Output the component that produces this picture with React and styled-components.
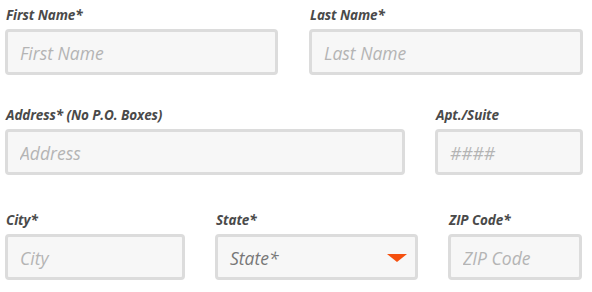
import styled, { createGlobalStyle } from "styled-components";

const GlobalStyle = createGlobalStyle`
  body {
    margin: 0;
    background: #ffffff;
    font-family: "Open Sans", "Liberation Sans", sans-serif;
  }
`;

const Form = styled.form`
  width: 578px;
  padding: 7px 0 0 5px;
  display: flex;
  flex-direction: column;
`;

const Row = styled.div`
  display: grid;
  grid-template-columns: ${(p) => p.cols};
  column-gap: ${(p) => p.gap || "30px"};
  margin-top: ${(p) => p.top || "0"};
`;

const Field = styled.div`
  display: flex;
  flex-direction: column;
`;

const Label = styled.label`
  font-size: 13.5px;
  line-height: 17px;
  font-weight: 700;
  font-style: italic;
  color: #4a4a4a;
  margin: 0 0 5px 1px;
  letter-spacing: -0.1px;
`;

const Input = styled.input`
  box-sizing: border-box;
  height: 46px;
  width: 100%;
  border: 3px solid #dcdcdc;
  border-radius: 4px;
  background: #f7f7f7;
  padding: 2px 12px 0;
  font-family: inherit;
  font-size: 17.5px;
  font-style: italic;
  color: #555;
  outline: none;

  &::placeholder {
    color: #b4b4b4;
  }
`;

const SelectBox = styled.div`
  box-sizing: border-box;
  height: 46px;
  border: 3px solid #dcdcdc;
  border-radius: 4px;
  background: #f7f7f7;
  padding: 2px 8px 0 12px;
  display: flex;
  align-items: center;
  justify-content: space-between;
  font-size: 17.5px;
  font-style: italic;
  color: #777;
`;

const Caret = styled.span`
  width: 0;
  height: 0;
  border-left: 10px solid transparent;
  border-right: 10px solid transparent;
  border-top: 8px solid #f5500f;
`;

const App = () => (
  <>
    <GlobalStyle />
    <Form>
      <Row cols="273px 274px" gap="31px">
        <Field>
          <Label>First Name*</Label>
          <Input placeholder="First Name" />
        </Field>
        <Field>
          <Label>Last Name*</Label>
          <Input placeholder="Last Name" />
        </Field>
      </Row>
      <Row cols="400px 148px" top="32px">
        <Field>
          <Label>Address* (No P.O. Boxes)</Label>
          <Input placeholder="Address" />
        </Field>
        <Field>
          <Label>Apt./Suite</Label>
          <Input placeholder="####" />
        </Field>
      </Row>
      <Row cols="180px 203px 134px" gap="30px" top="37px">
        <Field>
          <Label>City*</Label>
          <Input placeholder="City" />
        </Field>
        <Field>
          <Label>State*</Label>
          <SelectBox>
            State*
            <Caret />
          </SelectBox>
        </Field>
        <Field>
          <Label>ZIP Code*</Label>
          <Input placeholder="ZIP Code" />
        </Field>
      </Row>
    </Form>
  </>
);

export default App;
